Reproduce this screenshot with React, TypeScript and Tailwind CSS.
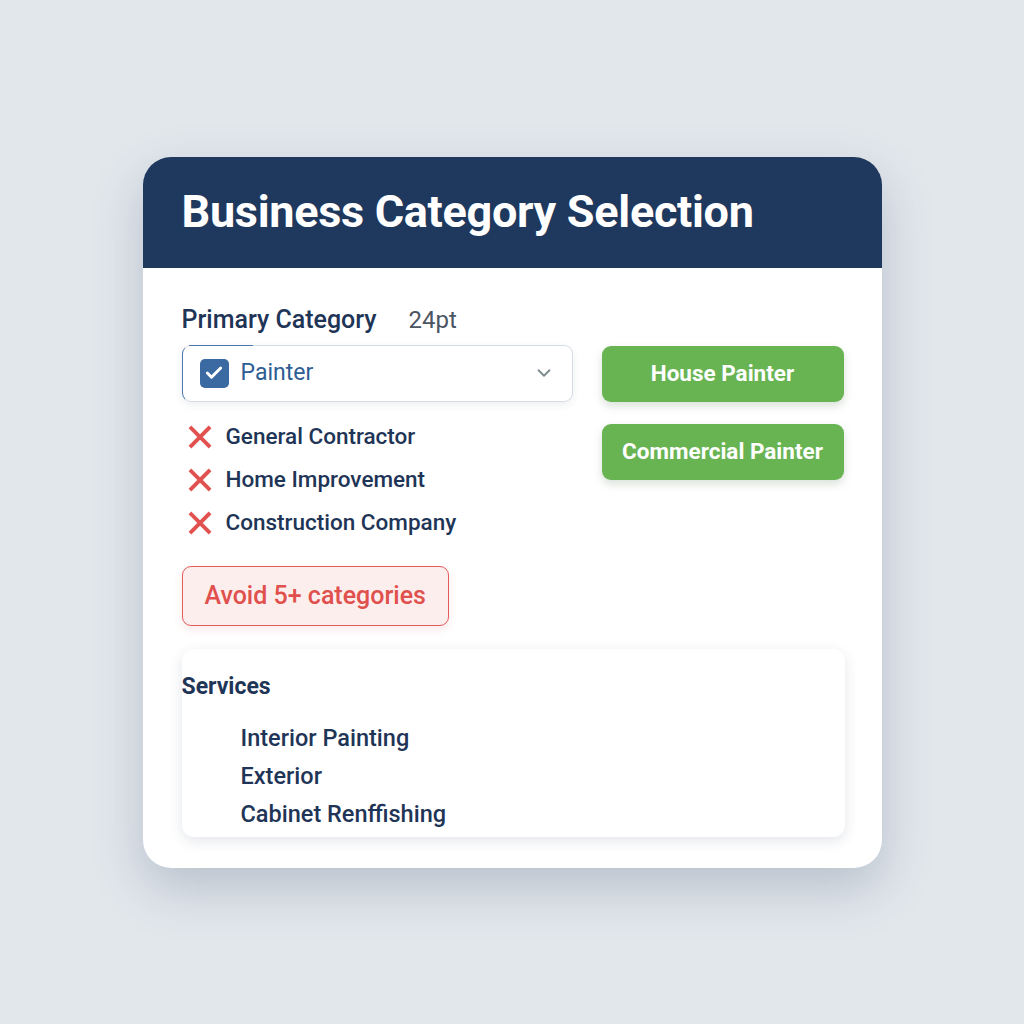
import { ChevronDown, Check } from "lucide-react";

const rejected = ["General Contractor", "Home Improvement", "Construction Company"];
const services = ["Interior Painting", "Exterior", "Cabinet Renffishing"];

function RedX() {
  return (
    <svg viewBox="0 0 24 24" className="h-[26px] w-[26px] shrink-0">
      <path d="M4 4 L20 20 M20 4 L4 20" stroke="#e0524f" strokeWidth="3.6" strokeLinecap="square" />
    </svg>
  );
}

export default function App() {
  return (
    <div
      className="flex min-h-screen items-center justify-center bg-[#e2e7ec]"
      style={{ fontFamily: "Roboto, 'Liberation Sans', sans-serif" }}
    >
      <div className="w-[739px] overflow-hidden rounded-[28px] bg-white shadow-[0_20px_50px_rgba(60,80,110,0.25)]">
        {/* Header */}
        <div className="flex h-[111px] items-center bg-[#1f385e] pl-[39px]">
          <h1 className="text-[45px] font-bold tracking-[-0.3px] text-white">
            Business Category Selection
          </h1>
        </div>

        {/* Body */}
        <div className="pl-[39px] pr-[38px] pt-[38px] pb-[31px]">
          <div className="flex gap-[29px]">
            <div className="w-[391px]">
              <div className="flex items-baseline gap-[32px] text-[24px] leading-[28px]">
                <span className="text-[25px] font-medium text-[#1f3557]">Primary Category</span>
                <span className="text-[#4b5563]">24pt</span>
              </div>

              <div className="relative mt-[11px] flex h-[57px] items-center rounded-[9px] border border-[#d6dce3] border-l-[#4a78ad] bg-white px-[17px] shadow-[0_3px_8px_rgba(30,50,80,0.08)]">
                <span className="absolute -top-px left-[6px] h-[1.5px] w-[64px] bg-[#4a78ad]" />
                <div className="flex h-[29px] w-[29px] items-center justify-center rounded-[5px] bg-[#3b6aa3]">
                  <Check className="h-[20px] w-[20px] text-white" strokeWidth={3.5} />
                </div>
                <span className="ml-[12px] text-[23px] text-[#2e5d93]">Painter</span>
                <ChevronDown className="ml-auto h-[22px] w-[22px] text-[#7d8b90]" strokeWidth={2} />
              </div>

              <div className="mt-[21px] flex flex-col gap-[15px] pl-[5px]">
                {rejected.map((r) => (
                  <div key={r} className="flex h-[28px] items-center gap-[13px]">
                    <RedX />
                    <span className="text-[22.5px] font-medium text-[#1f3557]">{r}</span>
                  </div>
                ))}
              </div>

              <div className="mt-[29px] inline-flex h-[60px] items-center rounded-[9px] border-[1.5px] border-[#e25c5a] bg-[#fdeeee] px-[22px] shadow-[0_4px_10px_rgba(220,80,80,0.12)]">
                <span className="text-[25px] font-medium text-[#e0504d]">Avoid 5+ categories</span>
              </div>
            </div>

            <div className="flex w-[242px] flex-col gap-[22px] pt-[40px]">
              <div className="flex h-[56px] items-center justify-center rounded-[9px] bg-[#68b352] shadow-[0_4px_10px_rgba(60,100,60,0.2)]">
                <span className="text-[22.5px] font-bold text-white">House Painter</span>
              </div>
              <div className="flex h-[56px] items-center justify-center rounded-[9px] bg-[#68b352] shadow-[0_4px_10px_rgba(60,100,60,0.2)]">
                <span className="text-[22.5px] font-bold text-white">Commercial Painter</span>
              </div>
            </div>
          </div>

          <div className="mt-[23px] h-[188px] w-[663px] rounded-[12px] bg-white pt-[22px] shadow-[0_4px_14px_rgba(30,50,80,0.12)]">
            <h2 className="text-[23px] font-bold leading-[32px] text-[#1f3557]">Services</h2>
            <div className="mt-[20px] flex flex-col pl-[59px]">
              {services.map((s) => (
                <div key={s} className="h-[38px] text-[23.5px] font-medium leading-[30px] text-[#1f3557]">
                  {s}
                </div>
              ))}
            </div>
          </div>
        </div>
      </div>
    </div>
  );
}
